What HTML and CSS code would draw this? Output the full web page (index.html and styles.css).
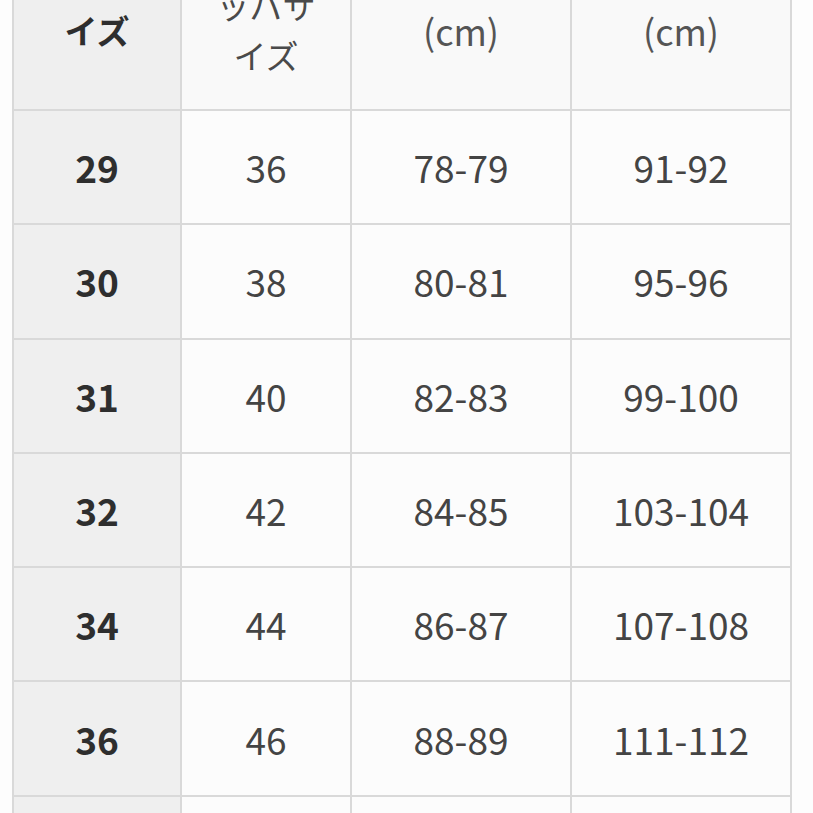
FILE: index.html
```html
<!DOCTYPE html>
<html lang="ja">
<head>
<meta charset="utf-8">
<title>サイズ表</title>
<link rel="stylesheet" href="styles.css">
</head>
<body>
<div class="page">
  <div class="table">
    <div class="cell head first"><span>サ</span><span>イズ</span></div>
    <div class="cell head"><span>ヨーロ</span><span>ッパサ</span><span>イズ</span></div>
    <div class="cell head"><span>ウエスト</span><span class="unit">(cm)</span></div>
    <div class="cell head"><span>ヒップ</span><span class="unit">(cm)</span></div>

    <div class="cell first">29</div><div class="cell">36</div><div class="cell">78-79</div><div class="cell">91-92</div>
    <div class="cell first">30</div><div class="cell">38</div><div class="cell">80-81</div><div class="cell">95-96</div>
    <div class="cell first">31</div><div class="cell">40</div><div class="cell">82-83</div><div class="cell">99-100</div>
    <div class="cell first">32</div><div class="cell">42</div><div class="cell">84-85</div><div class="cell">103-104</div>
    <div class="cell first">34</div><div class="cell">44</div><div class="cell">86-87</div><div class="cell">107-108</div>
    <div class="cell first">36</div><div class="cell">46</div><div class="cell">88-89</div><div class="cell">111-112</div>
    <div class="cell first">38</div><div class="cell">48</div><div class="cell">90-91</div><div class="cell">115-116</div>
  </div>
</div>
</body>
</html>
```
FILE: styles.css
```css
html, body {
  margin: 0;
  padding: 0;
  background: #ffffff;
  overflow: hidden;
}
.page {
  width: 813px;
  height: 813px;
  overflow: hidden;
  background: #fdfdfd;
}
.table {
  margin-left: 12px;
  margin-top: -101px;
  width: 780px;
  box-sizing: border-box;
  padding: 2px;
  display: grid;
  grid-template-columns: 166px 168px 218px 218px;
  grid-template-rows: 208px repeat(7, 112.3px);
  gap: 2px;
  background: #d9d9d9;
  font-family: "Noto Sans CJK JP", "Noto Sans", sans-serif;
}
.cell {
  background: #fcfcfc;
  display: flex;
  align-items: center;
  justify-content: center;
  font-size: 37px;
  color: #444444;
}
.cell.first {
  background: #efefef;
  color: #2e2e2e;
  font-weight: 700;
}
.cell.head {
  flex-direction: column;
  font-size: 33px;
  line-height: 50px;
  color: #4a4a4a;
  background: #f9f9f9;
}
.cell.head .unit {
  font-size: 36px;
  color: #555555;
}
.cell.head.first {
  background: #efefef;
  color: #2e2e2e;
  font-weight: 700;
}
```
